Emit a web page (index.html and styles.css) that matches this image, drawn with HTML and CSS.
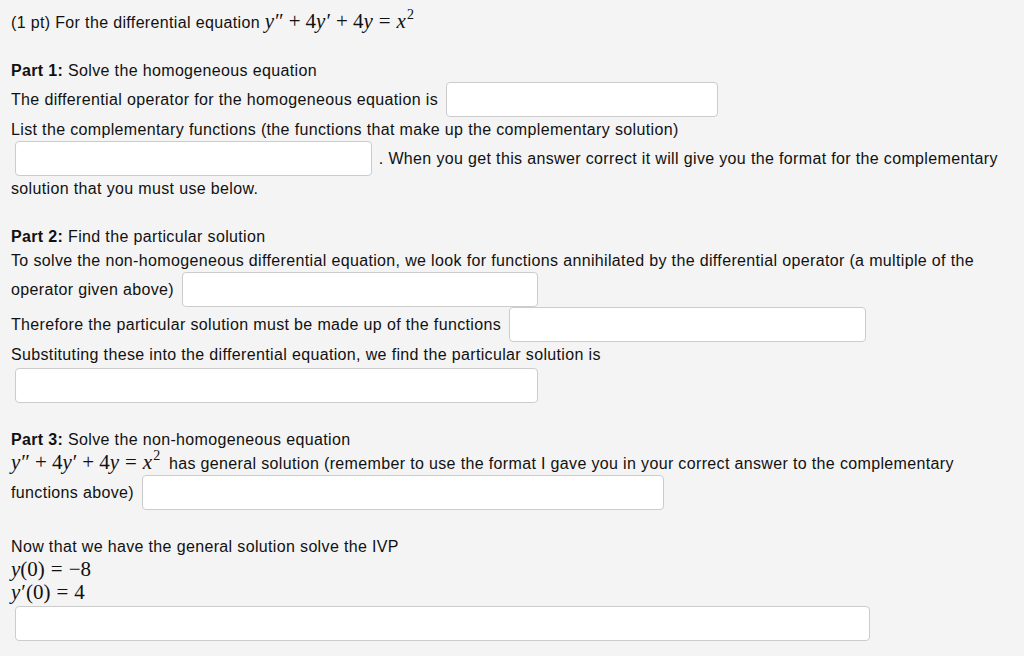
FILE: index.html
```html
<!DOCTYPE html>
<html>
<head>
<meta charset="utf-8">
<link rel="stylesheet" href="styles.css">
</head>
<body>
<div class="problem">
  <div class="line">(1 pt) For the differential equation <span class="math"><i>y</i><span class="pr">″</span><span class="op">+</span>4<i>y</i><span class="pr">′</span><span class="op">+</span>4<i>y</i><span class="rel">=</span><i>x</i><sup>2</sup></span></div>

  <div class="section">
    <div class="line"><b>Part 1:</b> Solve the homogeneous equation</div>
    <div class="line tall">The differential operator for the homogeneous equation is <span class="answer w272"></span></div>
    <div class="line">List the complementary functions (the functions that make up the complementary solution)</div>
    <div class="line tall"><span class="answer w357 first"></span> . When you get this answer correct it will give you the format for the complementary</div>
    <div class="line">solution that you must use below.</div>
  </div>

  <div class="section">
    <div class="line"><b>Part 2:</b> Find the particular solution</div>
    <div class="line">To solve the non-homogeneous differential equation, we look for functions annihilated by the differential operator (a multiple of the</div>
    <div class="line tall">operator given above) <span class="answer w356"></span></div>
    <div class="line tall">Therefore the particular solution must be made up of the functions <span class="answer w357"></span></div>
    <div class="line">Substituting these into the differential equation, we find the particular solution is</div>
    <div class="line tall alone"><span class="answer w523 first"></span></div>
  </div>

  <div class="section">
    <div class="line"><b>Part 3:</b> Solve the non-homogeneous equation</div>
    <div class="line"><span class="math lead"><i>y</i><span class="pr">″</span><span class="op">+</span>4<i>y</i><span class="pr">′</span><span class="op">+</span>4<i>y</i><span class="rel">=</span><i>x</i><sup>2</sup></span> has general solution (remember to use the format I gave you in your correct answer to the complementary</div>
    <div class="line tall">functions above) <span class="answer w522"></span></div>
  </div>

  <div class="section">
    <div class="line">Now that we have the general solution solve the IVP</div>
    <div class="line mline"><span class="math"><i>y</i>(0)<span class="rel">=</span>−8</span></div>
    <div class="line mline"><span class="math"><i>y</i><span class="pr">′</span>(0)<span class="rel">=</span>4</span></div>
    <div class="line tall alone"><span class="answer w855 first"></span></div>
  </div>
</div>
</body>
</html>
```

FILE: styles.css
```css
html, body {
  margin: 0;
  padding: 0;
  background: #f4f4f4;
}
body {
  width: 1024px;
  height: 656px;
  overflow: hidden;
  font-family: "Liberation Sans", Arial, sans-serif;
  font-size: 16px;
  letter-spacing: 0.35px;
  color: #111;
}
.problem {
  padding: 10px 11px;
}
.section {
  margin-top: 24px;
}
.line {
  height: 24px;
  line-height: 26px;
  white-space: nowrap;
}
.line.tall {
  height: 35px;
  line-height: 35px;
}
.line.alone {
  margin-top: 2px;
}
.line.mline {
  height: 23px;
  line-height: 26px;
}
.line b {
  font-weight: bold;
}
.math {
  font-family: "Liberation Serif", "Times New Roman", serif;
  font-size: 21px;
  letter-spacing: 0;
  line-height: 1;
}
.math.lead {
  margin-right: 4px;
}
.math .pr {
  font-style: normal;
  margin-left: 1px;
}
.math .op {
  margin: 0 5px;
}
.math .rel {
  margin: 0 6px;
}
.math sup {
  font-size: 14px;
  line-height: 0;
  vertical-align: 9px;
  margin-left: 1px;
}
.answer {
  display: inline-block;
  box-sizing: border-box;
  height: 35px;
  margin-left: 3px;
  vertical-align: top;
  background: #fff;
  border: 1px solid #cccccc;
  border-radius: 4px;
}
.answer.first {
  margin-left: 4px;
  margin-right: 2px;
}
.w272 { width: 272px; }
.w356 { width: 356px; }
.w357 { width: 357px; }
.w522 { width: 522px; }
.w523 { width: 523px; }
.w855 { width: 855px; }
```
